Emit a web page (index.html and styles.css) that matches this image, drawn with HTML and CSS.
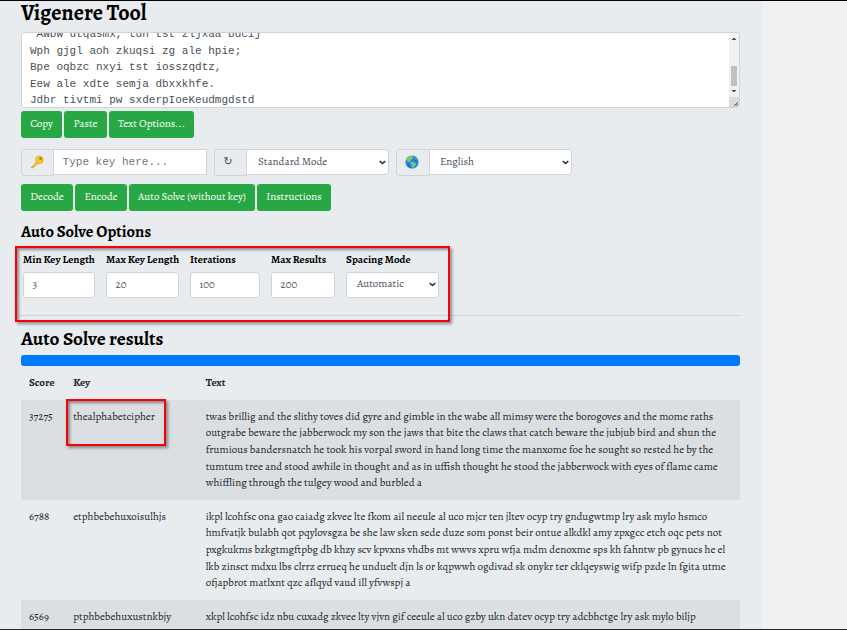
FILE: index.html
```html
<!DOCTYPE html>
<html lang="en">
<head>
<meta charset="utf-8">
<title>Vigenere Tool</title>
<link rel="stylesheet" href="styles.css">
</head>
<body>
<main class="page">
  <h1>Vigenere Tool</h1>
  <div class="cipher">
    <div class="cipher-text"> Awbw utqasmx, tuh tst zljxaa bdcij
Wph gjgl aoh zkuqsi zg ale hpie;
Bpe oqbzc nxyi tst iosszqdtz,
Eew ale xdte semja dbxxkhfe.
Jdbr tivtmi pw sxderpIoeKeudmgdstd</div>
    <svg class="scroll" width="10" height="74" viewBox="0 0 10 74" shape-rendering="crispEdges">
      <path fill="#f1f1f1" d="M0 0h10v64H0z"/><path fill="#dcdcdc" d="M0 64h10v10H0z"/>
      <path fill="#c1c1c1" d="M2 33h6v20H2z"/>
      <path fill="#505050" d="M4 5h2v1h1v1H3V6h1zM3 57h4v1H6v1H4v-1H3z"/>
      <path fill="#555" d="M5 72h1v1H5zM6 71h1v1H6zM7 70h1v1H7zM8 69h1v1H8zM7 72h1v1H7zM8 71h1v1H8z"/>
    </svg>
  </div>
  <div class="buttons first">
    <button class="b-copy">Copy</button><button class="b-paste">Paste</button><button class="b-text">Text Options...</button>
  </div>
  <div class="groups">
    <div class="group g-key"><span class="addon"><svg width="14" height="14" viewBox="0 0 14 14"><path d="M7.8 6.2 1.2 12.2V13h2l.5-.7v-1l1.4-.2.3-1.3 1.3-.3 2.5-2.3" fill="#fbbd27" stroke="#d99512" stroke-width=".6"/><circle cx="9.3" cy="4.8" r="3.9" fill="#fdc52e" stroke="#dd9c19" stroke-width=".6"/><circle cx="10.4" cy="3.6" r="1.2" fill="#866a42"/></svg></span><span class="field mono">Type key here...</span></div>
    <div class="group g-mode"><span class="addon reload">↻</span><span class="field select"><span>Standard Mode</span><svg width="7" height="5" viewBox="0 0 7 5"><path d="m.7 1.1 2.8 2.3 2.8-2.3"/></svg></span></div>
    <div class="group g-lang"><span class="addon"><svg width="14" height="14" viewBox="0 0 14 14"><circle cx="7" cy="7" r="6.6" fill="#2387e8"/><path d="M1 5c.5-2 2-3.6 4.2-4.3L8 .9l.5 1.5-1.7.5.7 1.2-1.7.8-.7 1.4.8.8-1 .3L3 6.2zM6 7.3l2.2-.2 3 1.9-.8 1.6-1.3.7-1 2-.9-.3-.2-2.3-1.3-1.9zM10.5 2.3l2 2.2-.8.1-1.5-1z" fill="#83c66a"/><path d="M3.2 8.2c.2 2 1 3.3 2.2 4.6M9.9 5.2l2.7 1.3" stroke="#1265c1" stroke-width="1" fill="none"/></svg></span><span class="field select"><span>English</span><svg width="7" height="5" viewBox="0 0 7 5"><path d="m.7 1.1 2.8 2.3 2.8-2.3"/></svg></span></div>
  </div>
  <div class="buttons second">
    <button class="b-dec">Decode</button><button class="b-enc">Encode</button><button class="b-auto">Auto Solve (without key)</button><button class="b-ins">Instructions</button>
  </div>
  <section class="options">
    <h2>Auto Solve Options</h2>
    <div class="option-list">
      <label class="o-min">Min Key Length<span class="num">3</span></label>
      <label class="o-max">Max Key Length<span class="num">20</span></label>
      <label class="o-it">Iterations<span class="num">100</span></label>
      <label class="o-res">Max Results<span class="num">200</span></label>
      <label class="o-sp">Spacing Mode<span class="num select"><span>Automatic</span><svg width="7" height="5" viewBox="0 0 7 5"><path d="m.7 1.1 2.8 2.3 2.8-2.3"/></svg></span></label>
    </div>
    <div class="highlight options-mark"></div>
  </section>
  <h2 class="results-title">Auto Solve results</h2>
  <div class="progress"></div>
  <div class="table">
    <div class="row head"><span>Score</span><span>Key</span><span>Text</span></div>
    <div class="row odd">
      <span>37275</span><span class="found">thealphabetcipher<i class="highlight key-mark"></i></span>
      <p>twas brillig and the slithy toves did gyre and gimble in the wabe all mimsy were the borogoves and the mome raths outgrabe beware the jabberwock my son the jaws that bite the claws that catch beware the jubjub bird and shun the frumious bandersnatch he took his vorpal sword in hand long time the manxome foe he sought so rested he by the tumtum tree and stood awhile in thought and as in uffish thought he stood the jabberwock with eyes of flame came whiffling through the tulgey wood and burbled a</p>
    </div>
    <div class="row">
      <span>6788</span><span>etphbebehuxoisulhjs</span>
      <p>ikpl lcohfsc ona gao caiadg zkvee lte fkom ail neeule al uco mjcr ten jltev ocyp try gndugwtmp lry ask mylo hsmco hmfvatjk bulabh qot pqylovsgza be she law sken sede duze som ponst beir ontue alkdkl amy zpxgcc etch oqc pets not pxgkukms bzkgtmgftpbg db khzy scv kpvxns vhdbs mt wwvs xpru wfja mdm denoxme sps kh fahntw pb gynucs he el lkb zinsct mdxu lbs clrrz errueq he unduelt djn ls or kqpwwh ogdivad sk onykr ter cklqeyswig wifp pzde ln fgita utme ofjapbrot matlxnt qzc aflqyd vaud ill yfvwspj a</p>
    </div>
    <div class="row odd">
      <span>6569</span><span>ptphbebehuxustnkbjy</span>
      <p>xkpl lcohfsc idz nbu cuxadg zkvee lty vjvn gif ceeule al uco gzby ukn datev ocyp try adcbhctge lry ask mylo biljp</p>
    </div>
  </div>
</main>
</body>
</html>
```
FILE: styles.css
```css
* { box-sizing: border-box; margin: 0; }
body {
  height: 630px; overflow: hidden; background: #f0f0f0;
  border-top: 1px solid #000; border-bottom: 1px solid #24272a;
  font: 11px/16.6px Alegreya, "Liberation Serif", serif; color: #212529;
}
.page { width: 762px; height: 628px; padding: 0 22px 0 21px; background: #e8ecef; overflow: hidden; }
h1, h2 { color: #000; white-space: nowrap; }
h1 { height: 31px; font-size: 22px; line-height: 24px; }
h2 { font-size: 16.5px; line-height: 20px; }

.cipher {
  display: flex; justify-content: space-between; height: 76px; overflow: hidden;
  background: #fff; border: 1px solid #ced4da; border-radius: 3px;
}
.cipher-text {
  margin: -7px 0 0 8px; white-space: pre; color: #495057;
  font: 11px/16.5px "Liberation Mono", monospace;
}
.scroll { flex: none; }

.buttons { display: flex; gap: 2px; height: 27px; }
.buttons.first { margin-top: 3px; }
.buttons.second { margin-top: 8px; }
button {
  height: 27px; padding: 0; border: 0; border-radius: 3px; background: #28a745;
  color: #fff; font: inherit; white-space: nowrap;
}
.b-copy { width: 41px; } .b-paste { width: 43px; } .b-text { width: 85px; }
.b-dec, .b-enc { width: 52px; } .b-auto { width: 126px; } .b-ins { width: 74px; }

.groups { display: flex; height: 27px; margin-top: 11px; color: #495057; }
.group { display: flex; }
.g-key { width: 186px; margin-right: 7px; }
.g-mode { width: 175px; margin-right: 7px; }
.g-lang { width: 176px; }
.addon {
  display: flex; align-items: center; justify-content: center; width: 33px; height: 27px;
  padding: 0 2px 2px 0; background: #e9ecef; border: 1px solid #ced4da; border-radius: 3px 0 0 3px;
}
.g-lang .addon { width: 34px; }
.reload { padding: 0 5px 3px 0; font: 11px "DejaVu Sans", sans-serif; }
.field {
  display: flex; align-items: center; flex: 1; height: 26px; margin-left: -1px; padding: 0 2px 0 11px;
  background: #fff; border: 1px solid #ced4da;
}
.mono { padding: 0 0 1px 8.6px; color: #6c757d; font: 11px "Liberation Mono", monospace; }
.g-lang .field { padding-left: 10px; }
.select { justify-content: space-between; border-radius: 0 3px 3px 0; }
.select svg { fill: none; stroke: #343a40; stroke-width: 1.7; }

.options { position: relative; height: 95px; margin-top: 10px; border-bottom: 1px solid #cfd3d6; }
.options h2 { padding-top: 1px; }
.option-list { display: flex; margin: 10px 0 0 2px; font-weight: bold; color: #000; }
.option-list label { display: block; height: 47px; white-space: nowrap; }
.num {
  display: flex; align-items: center; height: 26px; margin-top: 3px; padding: 2px 3px 0 8.5px;
  background: #fff; border: 1px solid #ced4da; border-radius: 3px; font-weight: normal; color: #495057;
}
.num.select { padding: 0 2px 0 10px; }
.o-min { width: 72px; margin-right: 11px; }
.o-max { width: 73px; margin-right: 11px; }
.o-it { width: 70px; margin-right: 11px; }
.o-res { width: 64px; margin-right: 11px; }
.o-sp { width: 93px; }
.highlight { position: absolute; border: 2px solid #fb0004; box-shadow: 2px 2px 3px #0006, inset 2px 2px 3px #0006; }
.options-mark { left: -6px; top: 25px; width: 435px; height: 76px; }

.results-title { height: 39px; padding-top: 13px; font-size: 19.3px; }
.progress { height: 11px; border-radius: 3px; background: #007bff; }
.row { display: grid; grid-template-columns: 44.2px 132.5px 1fr; height: 100px; padding: 8.5px 8px 0 8px; }
.head { height: 34.3px; padding-top: 9px; font-weight: bold; }
.odd { background: #dcdfe2; }
.found { position: relative; }
.key-mark { left: -7px; top: -10px; width: 100px; height: 47px; }
```
